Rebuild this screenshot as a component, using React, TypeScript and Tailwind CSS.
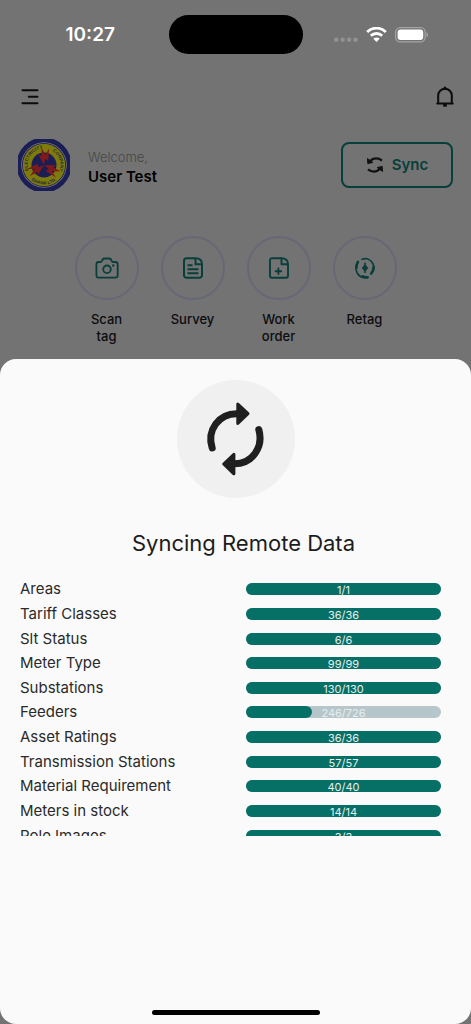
import React from "react";

const actions = [
  { label: "Scan tag", icon: <CameraIcon /> },
  { label: "Survey", icon: <SurveyIcon /> },
  { label: "Work order", icon: <WorkOrderIcon /> },
  { label: "Retag", icon: <RetagIcon /> },
];

const syncItems = [
  { name: "Areas", done: 1, total: 1 },
  { name: "Tariff Classes", done: 36, total: 36 },
  { name: "Slt Status", done: 6, total: 6 },
  { name: "Meter Type", done: 99, total: 99 },
  { name: "Substations", done: 130, total: 130 },
  { name: "Feeders", done: 246, total: 726 },
  { name: "Asset Ratings", done: 36, total: 36 },
  { name: "Transmission Stations", done: 57, total: 57 },
  { name: "Material Requirement", done: 40, total: 40 },
  { name: "Meters in stock", done: 14, total: 14 },
  { name: "Pole Images", done: 3, total: 3 },
];

export default function App() {
  return (
    <div className="min-h-screen flex flex-col bg-[#737373] font-['Inter',sans-serif]">
      <StatusBar />

      {/* Top bar */}
      <header className="flex items-center justify-between pl-5 pr-4 pt-[31px]">
        <button aria-label="Menu" className="w-6 h-6">
          <svg viewBox="0 0 24 24" fill="none" stroke="#0b0b0b" strokeWidth="2" strokeLinecap="round">
            <path d="M2.500 5.300h15M8.800 11.800h8.700M2.500 18.200h15" />
          </svg>
        </button>
        <button aria-label="Notifications" className="w-5 h-6">
          <svg viewBox="0 0 20 24" fill="none" stroke="#0b0b0b" strokeWidth="2" strokeLinecap="round" strokeLinejoin="round">
            <path d="M3.200 18.500V10.500a6.800 6.800 0 0 1 13.600 0v8M2.200 18.500h15.600" />
            <path d="M10 3.300v-.3M9.500 20.300h1" strokeWidth="3" />
          </svg>
        </button>
      </header>

      {/* User */}
      <section className="flex items-center px-[18px] pt-[30px]">
        <CompanyLogo />
        <div className="ml-[18px] flex-1 pt-1">
          <p className="text-[13px] leading-5 font-light text-[#464646]">Welcome,</p>
          <p className="text-[15px] leading-5 font-semibold text-black">User Test</p>
        </div>
        <button className="flex items-center justify-center gap-2 w-28 h-[46px] rounded-lg border-2 border-[#093f3a] text-[15px] font-semibold text-[#093f3a]">
          <svg className="w-[18px] h-[18px]" viewBox="0 0 18 18" fill="none" stroke="#111" strokeWidth="2.200">
            <path d="M4 5.200C7 1.600 12.500 1.600 16 4.600" />
            <path d="M14 12.800C11 16.400 5.500 16.400 2 13.400" />
            <path d="M1.500 2.600l.3 5 5-1.200z" fill="#111" strokeWidth="1" />
            <path d="M16.500 15.400l-.3-5-5 1.200z" fill="#111" strokeWidth="1" />
          </svg>
          Sync
        </button>
      </section>

      {/* Quick actions */}
      <nav className="flex justify-center pt-[45px] h-[168px]">
        {actions.map((a) => (
          <button key={a.label} className="w-[86px] flex flex-col items-center">
            <span className="w-16 h-16 rounded-full border-2 border-[#676875] flex items-center justify-center">
              {a.icon}
            </span>
            <span className="mt-[11px] w-12 text-[13px] leading-[17px] font-medium text-[#0c0c0f]">
              {a.label}
            </span>
          </button>
        ))}
      </nav>

      {/* Sync sheet */}
      <main className="flex-1 flex flex-col bg-[#fafafa] rounded-2xl pt-[21px]">
        <div className="mx-auto w-[118px] h-[118px] rounded-full bg-[#f0f0f0] flex items-center justify-center">
          <SyncIcon />
        </div>
        <h1 className="mt-[29px] text-center text-[22px] leading-8 text-[#1c1c1c] pl-4">
          Syncing Remote Data
        </h1>

        <div className="mt-[18px] h-[259px] overflow-hidden pl-5 pr-[30px]">
          <ul className="grid h-[271px] auto-rows-fr">
            {syncItems.map((item) => (
              <SyncRow key={item.name} {...item} />
            ))}
          </ul>
        </div>

        <div className="mt-auto mb-[9px] mx-auto w-[168px] h-[5px] rounded-full bg-black" />
      </main>
    </div>
  );
}

function SyncRow({ name, done, total }: { name: string; done: number; total: number }) {
  return (
    <li className="flex items-center justify-between text-[15px] leading-6 text-[#2a2a2a]">
      <span>{name}</span>
      <div
        role="progressbar"
        aria-label={name}
        aria-valuenow={done}
        aria-valuemax={total}
        className="relative w-[195px] h-3 rounded-full bg-[#b7c6cb]"
      >
        <div
          className="h-full rounded-full bg-[#066f66]"
          style={{ width: `${(done / total) * 100}%` }}
        />
        <span className="absolute inset-x-0 top-0 text-center text-[11px] leading-[14px] text-[#e6efee]">
          {done}/{total}
        </span>
      </div>
    </li>
  );
}

function StatusBar() {
  return (
    <div className="grid grid-cols-[1fr_134px_1fr] items-center pt-[15px]">
      <span className="text-center text-[19px] leading-6 font-semibold text-white pl-3">10:27</span>
      <div className="h-[39px] rounded-full bg-black" />
      <div className="flex items-center gap-2 pl-[31px]">
        <svg className="w-6 h-4" viewBox="0 0 24 16" fill="#929292">
          <circle cx="2.300" cy="12.800" r="2.200" />
          <circle cx="8.700" cy="12.800" r="2.200" />
          <circle cx="15.100" cy="12.800" r="2.200" />
          <circle cx="21.500" cy="12.800" r="2.200" />
        </svg>
        <svg className="w-[21px] h-4" viewBox="0 0 21 16" fill="none" stroke="#fff" strokeWidth="2.800">
          <path d="M1.200 4.900a13.300 13.300 0 0 1 18.600 0" />
          <path d="M4.800 8.800a8.200 8.200 0 0 1 11.400 0" />
          <path d="M10.500 15l-3.200-3.200a4.500 4.500 0 0 1 6.400 0z" fill="#fff" stroke="none" />
        </svg>
        <svg className="w-[34px] h-4" viewBox="0 0 34 16" fill="none">
          <rect x=".6" y=".6" width="29.600" height="14.300" rx="4.600" stroke="#a5a5a5" strokeWidth="1.200" />
          <rect x="2.600" y="2.500" width="25.600" height="10.500" rx="3" fill="#fff" />
          <path d="M31.500 5.300c2 .7 2 4.300 0 5z" fill="#a5a5a5" />
        </svg>
      </div>
    </div>
  );
}

function CompanyLogo() {
  return (
    <svg className="w-[52px] h-[52px]" viewBox="0 0 52 52" role="img" aria-label="Electricity Company Ghana Ltd.">
      <defs>
        <path id="ringTop" d="M11.300 33.200A16.400 16.400 0 1 1 40.700 33.200" />
        <path id="ringBottom" d="M8 33.500A19.500 19.500 0 0 0 44 33.500" />
      </defs>
      <circle cx="26" cy="26" r="27.500" fill="#1b1d55" />
      <circle cx="26" cy="26" r="22.800" fill="#77777c" />
      <circle cx="26" cy="26" r="22" fill="#1b1d55" />
      <circle cx="26" cy="26" r="21.200" fill="#7e7a0c" />
      <circle cx="26" cy="26" r="12.500" fill="#1b1d55" />
      <g fill="#7d1a1c">
        {[0, 120, 240].map((angle) => (
          <path
            key={angle}
            transform={`rotate(${angle} 26 26)`}
            d="M26 26L20.200 15.500l3.300 1.500L23.500 8.500l3.900 7.400L31 9.500l-.7 12.200-3.200-1.900z"
          />
        ))}
      </g>
      <g fill="#262a3d" fontFamily="Liberation Sans, sans-serif" fontWeight="700" fontSize="4.500">
        <text>
          <textPath href="#ringTop" startOffset="2">ELECTRICITY</textPath>
        </text>
        <text textAnchor="end">
          <textPath href="#ringTop" startOffset="98%">COMPANY</textPath>
        </text>
        <text textAnchor="middle">
          <textPath href="#ringBottom" startOffset="50%">GHANA LTD.</textPath>
        </text>
      </g>
    </svg>
  );
}

function CameraIcon() {
  return (
    <svg className="w-6 h-6" viewBox="0 0 24 24" fill="none" stroke="#093f3a" strokeWidth="1.800" strokeLinejoin="round">
      <path d="M3.500 6h2.300c.8 0 1-.4 1.300-1.200.3-1.400.8-2.300 2.400-2.300h4.600c1.600 0 2.100.9 2.400 2.300.3.800.5 1.200 1.300 1.200h2.500c1.500 0 2.400 1 2.400 2.500v10.800c0 1.500-.9 2.400-2.400 2.400H3.800c-1.500 0-2.400-.9-2.400-2.400V8.500C1.400 7 2.200 6 3.500 6z" />
      <circle cx="12" cy="13.300" r="3.800" />
      <circle cx="18.200" cy="9.500" r="1.200" fill="#093f3a" stroke="none" />
    </svg>
  );
}

function SurveyIcon() {
  return (
    <svg className="w-6 h-6" viewBox="0 0 24 24" fill="none" stroke="#093f3a" strokeWidth="2" strokeLinejoin="round">
      <path d="M14.500 2.200H5.500a2.500 2.500 0 0 0-2.500 2.500v14.600a2.500 2.500 0 0 0 2.500 2.500h13a2.500 2.500 0 0 0 2.500-2.500V8.200c0-4-2.500-6-6.500-6z" />
      <path d="M14.500 2.200v6H21" />
      <path d="M6.500 9.300h5M6.500 13.300h11M6.500 17.300h11" />
    </svg>
  );
}

function WorkOrderIcon() {
  return (
    <svg className="w-6 h-6" viewBox="0 0 24 24" fill="none" stroke="#093f3a" strokeWidth="1.900" strokeLinecap="round" strokeLinejoin="round">
      <path d="M14.500 2.200H5a2 2 0 0 0-2 2v15.600a2 2 0 0 0 2 2h14a2 2 0 0 0 2-2V8.200c0-4-2.500-6-6.500-6z" />
      <path d="M14.500 2.200v6H21" />
      <path d="M8.600 15.300h5.600M11.400 12.500v5.600" />
    </svg>
  );
}

function RetagIcon() {
  return (
    <svg className="w-6 h-6" viewBox="0 0 24 24" fill="none" stroke="#093f3a" strokeWidth="1.700" strokeLinecap="round">
      <path d="M9 3.300c5-1.700 9.200.6 11 4.600 1.700 4 .2 7.400-1.800 9.600" />
      <path d="M14.600 21.300C10 22.300 6.200 20.500 4.200 17 2.200 13.200 3 8.500 5 5.800" />
      <path d="M20.600 11c.1 2.600-.9 4.800-2.400 6.500M3.400 12c0-2.400.5-4.600 1.600-6.200M9.500 20.400c1.500.8 3.200 1.100 5.100.9" strokeWidth="2.600" />
      <path d="M12 7c.4 2.400 1.200 3.500 2.800 5-1.600 1.500-2.400 2.600-2.800 5-.4-2.400-1.200-3.500-2.800-5C10.800 10.500 11.600 9.400 12 7z" fill="#093f3a" strokeWidth="1" />
    </svg>
  );
}

function SyncIcon() {
  return (
    <svg className="w-20 h-20" viewBox="0 0 80 80" fill="none" stroke="#1f1f1f" strokeWidth="7" strokeLinecap="round" strokeLinejoin="round">
      <path d="M16.200 49C10.500 31 23 14.500 41 14.700" />
      <path d="M62.800 30.500C67.900 48.500 56 65 38 64.700" />
      <path d="M41.800 5v19.500L52 14.700z" fill="#1f1f1f" strokeWidth="3" />
      <path d="M37.900 55.300v19.500L27.700 65z" fill="#1f1f1f" strokeWidth="3" />
    </svg>
  );
}
